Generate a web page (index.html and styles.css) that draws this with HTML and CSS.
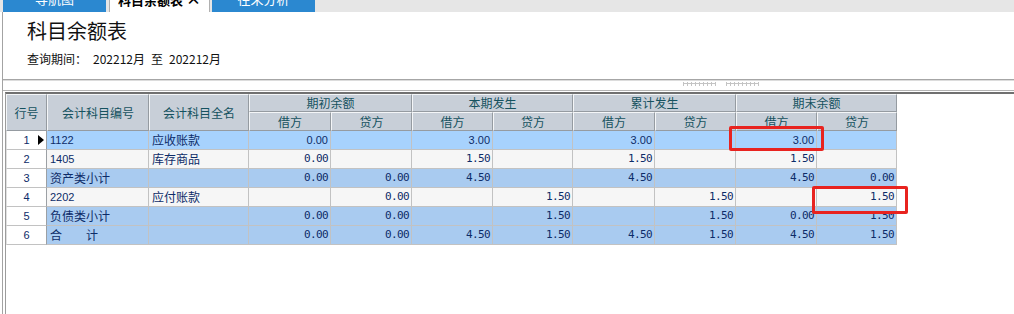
FILE: index.html
```html
<!DOCTYPE html>
<html lang="zh">
<head>
<meta charset="utf-8">
<title>科目余额表</title>
<link rel="stylesheet" href="styles.css">
</head>
<body>
<div class="tabs">
  <div class="tab tab-blue">导航图</div>
  <div class="tab tab-active">科目余额表 <span class="close">×</span></div>
  <div class="tab tab-blue tab-third">往来分析</div>
</div>
<div class="panel">
  <div class="head">
    <h1 class="title">科目余额表</h1>
    <div class="period"><span class="lbl">查询期间：</span><span>202212月</span><span class="to">至</span><span>202212月</span></div>
  </div>
  <div class="splitter"><span class="grip"></span><span class="grip"></span></div>
  <div class="grid">
    <div class="grid-inner">
      <table class="sheet">
        <colgroup>
          <col class="c-rn"><col class="c-code"><col class="c-name">
          <col class="c-a"><col class="c-b"><col class="c-b"><col class="c-c"><col class="c-a"><col class="c-b"><col class="c-b"><col class="c-c">
        </colgroup>
        <thead>
          <tr class="h1row">
            <th rowspan="2">行号</th>
            <th rowspan="2">会计科目编号</th>
            <th rowspan="2">会计科目全名</th>
            <th colspan="2">期初余额</th>
            <th colspan="2">本期发生</th>
            <th colspan="2">累计发生</th>
            <th colspan="2">期末余额</th>
          </tr>
          <tr class="h2row">
            <th>借方</th><th>贷方</th><th>借方</th><th>贷方</th><th>借方</th><th>贷方</th><th>借方</th><th>贷方</th>
          </tr>
        </thead>
        <tbody>
          <tr class="sel">
            <td class="rn">1<span class="cur"></span></td><td class="code">1122</td><td>应收账款</td>
            <td class="n">0.00</td><td class="n"></td><td class="n">3.00</td><td class="n"></td><td class="n">3.00</td><td class="n"></td><td class="n">3.00</td><td class="n"></td>
          </tr>
          <tr class="alt">
            <td class="rn">2</td><td class="code">1405</td><td>库存商品</td>
            <td class="n">0.00</td><td class="n"></td><td class="n">1.50</td><td class="n"></td><td class="n">1.50</td><td class="n"></td><td class="n">1.50</td><td class="n"></td>
          </tr>
          <tr class="sum">
            <td class="rn">3</td><td>资产类小计</td><td></td>
            <td class="n">0.00</td><td class="n">0.00</td><td class="n">4.50</td><td class="n"></td><td class="n">4.50</td><td class="n"></td><td class="n">4.50</td><td class="n">0.00</td>
          </tr>
          <tr class="alt">
            <td class="rn">4</td><td class="code">2202</td><td>应付账款</td>
            <td class="n"></td><td class="n">0.00</td><td class="n"></td><td class="n">1.50</td><td class="n"></td><td class="n">1.50</td><td class="n"></td><td class="n">1.50</td>
          </tr>
          <tr class="sum">
            <td class="rn">5</td><td>负债类小计</td><td></td>
            <td class="n">0.00</td><td class="n">0.00</td><td class="n"></td><td class="n">1.50</td><td class="n"></td><td class="n">1.50</td><td class="n">0.00</td><td class="n">1.50</td>
          </tr>
          <tr class="sum">
            <td class="rn">6</td><td>合　　计</td><td></td>
            <td class="n">0.00</td><td class="n">0.00</td><td class="n">4.50</td><td class="n">1.50</td><td class="n">4.50</td><td class="n">1.50</td><td class="n">4.50</td><td class="n">1.50</td>
          </tr>
        </tbody>
      </table>
    </div>
  </div>
</div>
<div class="mark mark-1"></div>
<div class="mark mark-2"></div>
</body>
</html>
```
FILE: styles.css
```css
* { box-sizing: border-box; }
html, body { margin: 0; padding: 0; background: #fff; }
body {
  position: relative;
  width: 1014px;
  height: 314px;
  overflow: hidden;
  font-family: "Noto Sans CJK SC", "Noto Sans", sans-serif;
  color: #111;
}

/* tabs */
.tabs {
  display: flex;
  height: 12px;
  overflow: hidden;
  background: #e6e6e6;
  padding-left: 3px;
}
.tab {
  width: 103px;
  height: 24px;
  margin-top: -12px;
  line-height: 22px;
  font-size: 13px;
  text-align: center;
  flex: none;
}
.tab-blue { background: #2b88d0; color: #fff; }
.tab-active {
  width: 101px;
  margin-left: 3px;
  background: #fff;
  color: #000;
  font-weight: bold;
  border-left: 1px solid #b0b0b0;
  border-right: 1px solid #b0b0b0;
}
.close { font-weight: bold; font-size: 15px; }
.tab-third { margin-left: 2px; }

/* panel */
.panel {
  margin-left: 2px;
  height: 302px;
  border-left: 1px solid #a3a3a3;
  display: flex;
  flex-direction: column;
}
.head {
  padding: 7px 0 12px 24px;
  border-bottom: 1px solid #a6a6a6;
  box-shadow: 0 1px 0 #dcdcdc;
}
.title {
  margin: 0;
  font-size: 20px;
  line-height: 24px;
  font-weight: normal;
  color: #111;
}
.period {
  margin-top: 8px;
  font-size: 12px;
  line-height: 16px;
  color: #111;
  display: flex;
}
.period .lbl { margin-right: 6px; }
.period .to { margin: 0 6px; }

.splitter {
  height: 10px;
  padding: 2px 0 0 680px;
  display: flex;
  gap: 10px;
}
.grip {
  width: 33px;
  height: 4px;
  background:
    linear-gradient(#c4c4c4, #c4c4c4) 0 1px / 100% 1px no-repeat,
    repeating-linear-gradient(90deg, #c4c4c4 0 1px, transparent 1px 4px);
}

.grid {
  flex: 1;
  border-top: 1px solid #b4b4b4;
  padding-top: 1px;
  display: flex;
}
.grid-inner {
  flex: 1;
  margin-left: 2px;
  border-top: 2px solid #707070;
  border-left: 1px solid #9c9c9c;
}

/* sheet */
.sheet {
  border-collapse: separate;
  border-spacing: 0;
  table-layout: fixed;
  width: 891px;
  font-size: 12px;
}
.c-rn { width: 41px; }
.c-code { width: 102px; }
.c-name { width: 100px; }
.c-a { width: 82px; }
.c-b { width: 81px; }
.c-c { width: 80px; }

.sheet th {
  padding: 0;
  background: #c8cfd8;
  color: #15525f;
  font-weight: normal;
  border-top: 1px solid #f4f6f8;
  border-left: 1px solid #f4f6f8;
  border-right: 1px solid #959ba1;
  border-bottom: 1px solid #959ba1;
  text-align: center;
  white-space: nowrap;
}
.h1row th { height: 18px; line-height: 16px; }
.h2row th { height: 19px; line-height: 17px; }

.sheet td {
  height: 19px;
  padding: 0 3px;
  line-height: 18px;
  color: #0d2c68;
  border-right: 1px solid #c2c2c2;
  border-bottom: 1px solid #c2c2c2;
  white-space: nowrap;
  overflow: hidden;
}
.sel td { background: #a7d2fd; }
.alt td { background: #f6f6f6; }
.sum td { background: #a9cbf0; }

.sheet td.rn {
  position: relative;
  background: #fff;
  text-align: center;
  color: #0d2c68;
  font-family: "Liberation Sans", sans-serif;
  font-size: 11px;
  border-right: 1px solid #9ca0a4;
  border-left: 1px solid #e0e0e0;
  padding: 0;
}
.cur {
  position: absolute;
  right: 2px;
  top: 4px;
  width: 0;
  height: 0;
  border-left: 6px solid #000;
  border-top: 5px solid transparent;
  border-bottom: 5px solid transparent;
}
.sheet td.code {
  font-family: "Liberation Sans", sans-serif;
  font-size: 11px;
}
.sheet td.n {
  text-align: right;
  padding-right: 2px;
  font-family: "DejaVu Sans Mono", monospace;
  font-size: 11px;
  letter-spacing: -0.6px;
}
.sel td.n {
  font-family: "Liberation Sans", sans-serif;
  letter-spacing: 0;
}

/* annotation rectangles */
.mark {
  position: absolute;
  border: 3px solid #e8231f;
  border-radius: 2px;
}
.mark-1 { left: 729px; top: 126px; width: 95px; height: 25px; }
.mark-2 { left: 812px; top: 186px; width: 96px; height: 28px; }
```
